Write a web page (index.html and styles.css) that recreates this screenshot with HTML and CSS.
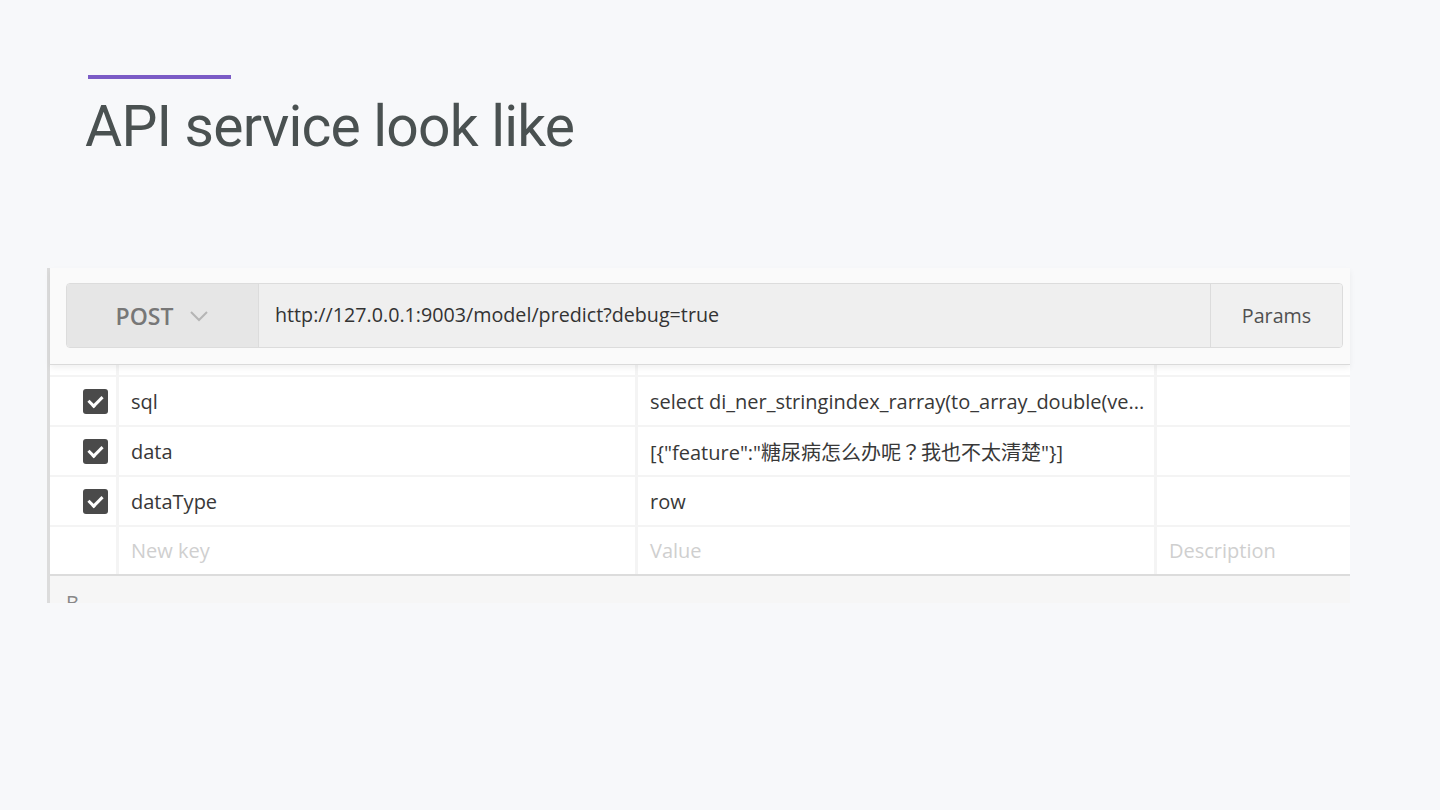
FILE: index.html
```html
<!DOCTYPE html>
<html lang="en">
<head>
    <meta charset="UTF-8">
    <meta name="viewport" content="width=device-width, initial-scale=1.0">
    <title>API service look like</title>
    <link rel="stylesheet" href="styles.css">
</head>
<body>
    <div class="slide">
        <div class="slide-header">
            <div class="accent"></div>
            <h1>API service look like</h1>
        </div>

        <div class="shot">
            <div class="shot-top">
                <div class="req-bar">
                    <div class="req-method">
                        <span>POST</span>
                        <svg class="chevron" width="20" height="12" viewBox="0 0 20 12">
                            <path d="M2 2 L10 10 L18 2" fill="none" stroke="#b5b5b5" stroke-width="2"/>
                        </svg>
                    </div>
                    <div class="req-url">http://127.0.0.1:9003/model/predict?debug=true</div>
                    <div class="req-params">Params</div>
                </div>
            </div>

            <div class="params-table">
                <!-- row cut off at the top -->
                <div class="row row-cut">
                    <div class="cell"></div>
                    <div class="cell"></div>
                    <div class="cell"></div>
                    <div class="cell"></div>
                </div>
                <div class="row">
                    <div class="cell cell-check"><span class="checkbox"></span></div>
                    <div class="cell">sql</div>
                    <div class="cell">select di_ner_stringindex_rarray(to_array_double(ve...</div>
                    <div class="cell"></div>
                </div>
                <div class="row">
                    <div class="cell cell-check"><span class="checkbox"></span></div>
                    <div class="cell">data</div>
                    <div class="cell">[{"feature":"糖尿病怎么办呢？我也不太清楚"}]</div>
                    <div class="cell"></div>
                </div>
                <div class="row">
                    <div class="cell cell-check"><span class="checkbox"></span></div>
                    <div class="cell">dataType</div>
                    <div class="cell">row</div>
                    <div class="cell"></div>
                </div>
                <div class="row row-new">
                    <div class="cell"></div>
                    <div class="cell placeholder">New key</div>
                    <div class="cell placeholder">Value</div>
                    <div class="cell placeholder">Description</div>
                </div>
            </div>

            <div class="shot-footer"><span>B</span></div>
        </div>
    </div>
</body>
</html>
```

FILE: styles.css
```css
body {
    margin: 0;
    background-color: #f7f8fa;
    font-family: "Open Sans", "Noto Sans CJK TC", sans-serif;
}

.slide {
    width: 1440px;
    height: 810px;
    overflow: hidden;
}

.slide-header {
    padding-top: 75px;
    padding-left: 88px;
}

.accent {
    width: 143px;
    height: 4px;
    background-color: #7b5cc6;
}

.slide-header h1 {
    margin: 13px 0 0 -3px;
    font-family: Roboto, "Liberation Sans", sans-serif;
    font-weight: normal;
    font-size: 57px;
    letter-spacing: -0.8px;
    line-height: 70px;
    color: #4a5151;
}

/* the embedded screenshot */
.shot {
    margin-top: 106px;
    margin-left: 47px;
    width: 1300px;
    border-left: 3px solid #dcdcdc;
    background-color: #fff;
}

.shot-top {
    background-color: #fafafa;
    padding: 15px 7px 16px 16px;
    border-bottom: 1px solid #dadada;
    position: relative;
    box-shadow: 0 3px 6px rgba(0, 0, 0, 0.06);
}

.req-bar {
    display: flex;
    height: 63px;
    border: 1px solid #dcdcdc;
    border-radius: 4px;
    overflow: hidden;
    font-size: 19.7px;
}

.req-method {
    width: 191px;
    background-color: #e6e6e6;
    border-right: 1px solid #dcdcdc;
    display: flex;
    align-items: center;
    justify-content: center;
    gap: 16px;
    color: #777;
    font-weight: 600;
    font-size: 23px;
}

.req-url {
    flex: 1;
    background-color: #efefef;
    display: flex;
    align-items: center;
    padding-left: 16px;
    padding-bottom: 3px;
    color: #333;
}

.req-params {
    width: 131px;
    background-color: #f0f0f0;
    border-left: 1px solid #dcdcdc;
    display: flex;
    align-items: center;
    justify-content: center;
    color: #505050;
}

.params-table {
    display: flex;
    flex-direction: column;
    gap: 2px;
    background-color: #f4f4f4;
    border-bottom: 2px solid #dcdcdc;
}

.row {
    display: grid;
    grid-template-columns: 66px 516px 516px 193px;
    column-gap: 3px;
    height: 48px;
}

.row-cut {
    height: 10px;
}

.row-new {
    height: 47px;
}

.cell {
    background-color: #fff;
    display: flex;
    align-items: center;
    padding-left: 12px;
    font-size: 20px;
    color: #383838;
    white-space: nowrap;
    overflow: hidden;
}

.cell-check {
    justify-content: flex-end;
    padding-left: 0;
    padding-right: 8px;
}

.checkbox {
    width: 25px;
    height: 25px;
    border-radius: 3px;
    background-color: #4a4a4a;
    position: relative;
}

.checkbox::after {
    content: "";
    position: absolute;
    left: 8px;
    top: 4px;
    width: 6px;
    height: 11px;
    border-right: 3px solid #fff;
    border-bottom: 3px solid #fff;
    transform: rotate(45deg);
}

.placeholder {
    color: #cfcfcf;
}

.shot-footer {
    height: 27px;
    background-color: #f6f6f6;
    overflow: hidden;
    position: relative;
}

.shot-footer span {
    position: absolute;
    left: 16px;
    top: 17px;
    font-size: 20px;
    line-height: 20px;
    color: #888;
}
```
